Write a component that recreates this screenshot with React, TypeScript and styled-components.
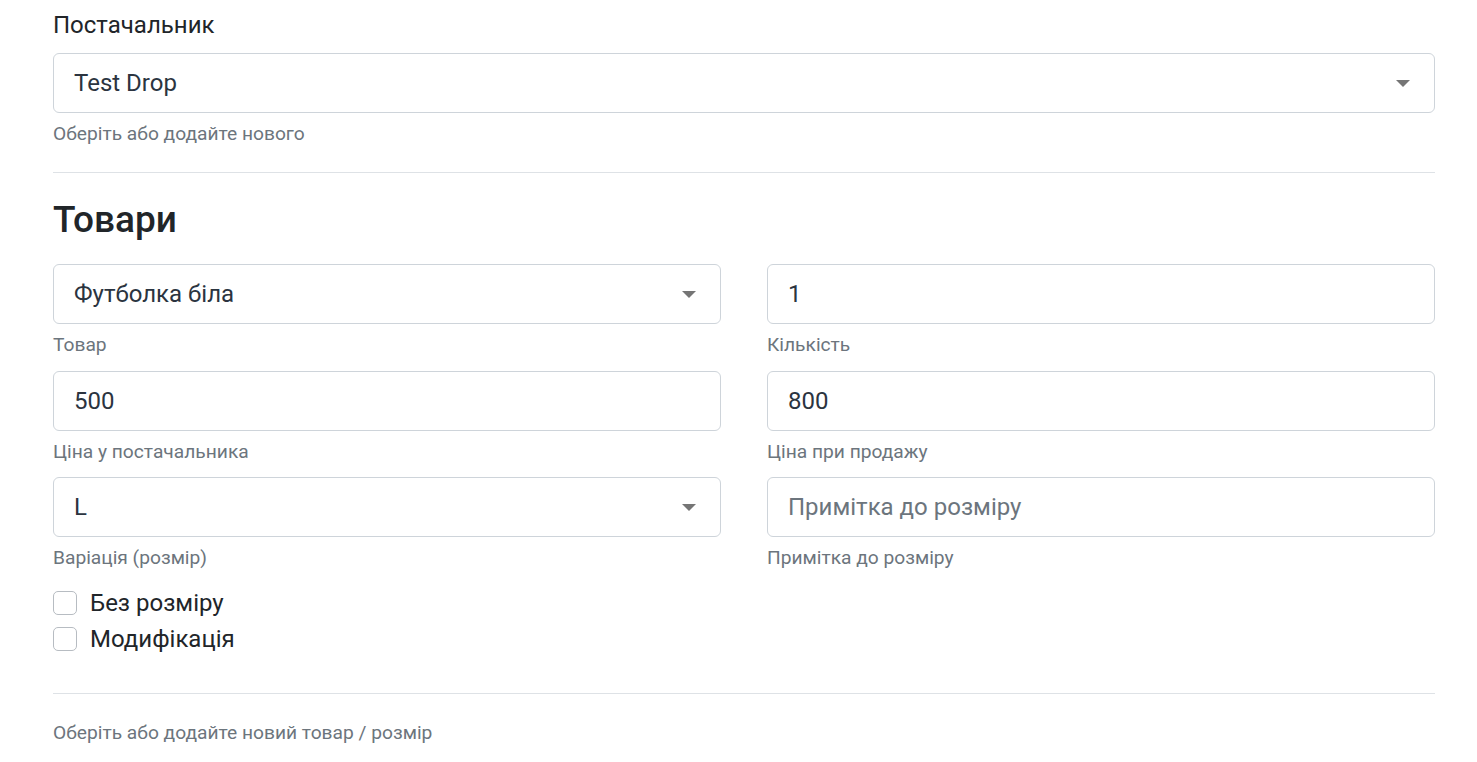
import React from "react";
import styled, { createGlobalStyle } from "styled-components";

const GlobalStyle = createGlobalStyle`
    body {
        margin: 0;
        background: #fff;
        font-family: Roboto, "Liberation Sans", sans-serif;
        color: #212529;
    }
`;

const Page = styled.div`
    padding: 7px 42px 0 53px;
`;

const Label = styled.div`
    font-size: 24px;
    line-height: 36px;
    margin-bottom: 10px;
`;

const Field = styled.div`
    position: relative;
    height: 60px;
    box-sizing: border-box;
    border: 1px solid #ced4da;
    border-radius: 6px;
    display: flex;
    align-items: center;
    padding: 0 20px;
    font-size: 24px;
    color: ${(p: { $placeholder?: boolean }) => (p.$placeholder ? "#6c757d" : "#2b3440")};
    background: #fff;
`;

const Caret = styled.span`
    position: absolute;
    right: 24px;
    top: 50%;
    margin-top: -3px;
    width: 0;
    height: 0;
    border-left: 7px solid transparent;
    border-right: 7px solid transparent;
    border-top: 7px solid #757575;
`;

const Help = styled.div`
    font-size: 19.2px;
    line-height: 28.8px;
    color: #6c757d;
    margin-top: 7px;
`;

const Divider = styled.hr`
    border: 0;
    border-top: 1px solid #dee2e6;
    margin: ${(p: { $top: number; $bottom: number }) => `${p.$top}px 0 ${p.$bottom}px`};
`;

const Heading = styled.h2`
    font-size: 37px;
    font-weight: 500;
    line-height: 44px;
    margin: 0 0 22px;
`;

const Grid = styled.div`
    display: grid;
    grid-template-columns: 1fr 1fr;
    column-gap: 46px;
    row-gap: 11px;
`;

const Checks = styled.div`
    display: flex;
    flex-direction: column;
    margin-top: 12px;
`;

const CheckRow = styled.label`
    display: flex;
    align-items: center;
    gap: 13px;
    font-size: 24px;
    line-height: 36px;
`;

const Box = styled.span`
    width: 24px;
    height: 24px;
    box-sizing: border-box;
    border: 1px solid #b7bcc2;
    border-radius: 5px;
    background: #fff;
`;

const Select: React.FC<{ value: string }> = ({ value }) => (
    <Field>
        {value}
        <Caret />
    </Field>
);

const Group: React.FC<{ help: string; children: React.ReactNode }> = ({ help, children }) => (
    <div>
        {children}
        <Help>{help}</Help>
    </div>
);

const App: React.FC = () => {
    return (
        <>
            <GlobalStyle />
            <Page>
                <Label>Постачальник</Label>
                <Group help="Оберіть або додайте нового">
                    <Select value="Test Drop" />
                </Group>
                <Divider $top={23} $bottom={25} />
                <Heading>Товари</Heading>
                <Grid>
                    <Group help="Товар">
                        <Select value="Футболка біла" />
                    </Group>
                    <Group help="Кількість">
                        <Field>1</Field>
                    </Group>
                    <Group help="Ціна у постачальника">
                        <Field>500</Field>
                    </Group>
                    <Group help="Ціна при продажу">
                        <Field>800</Field>
                    </Group>
                    <Group help="Варіація (розмір)">
                        <Select value="L" />
                    </Group>
                    <Group help="Примітка до розміру">
                        <Field $placeholder>Примітка до розміру</Field>
                    </Group>
                </Grid>
                <Checks>
                    <CheckRow>
                        <Box />
                        Без розміру
                    </CheckRow>
                    <CheckRow>
                        <Box />
                        Модифікація
                    </CheckRow>
                </Checks>
                <Divider $top={36} $bottom={25} />
                <Help>Оберіть або додайте новий товар / розмір</Help>
            </Page>
        </>
    );
};

export default App;
